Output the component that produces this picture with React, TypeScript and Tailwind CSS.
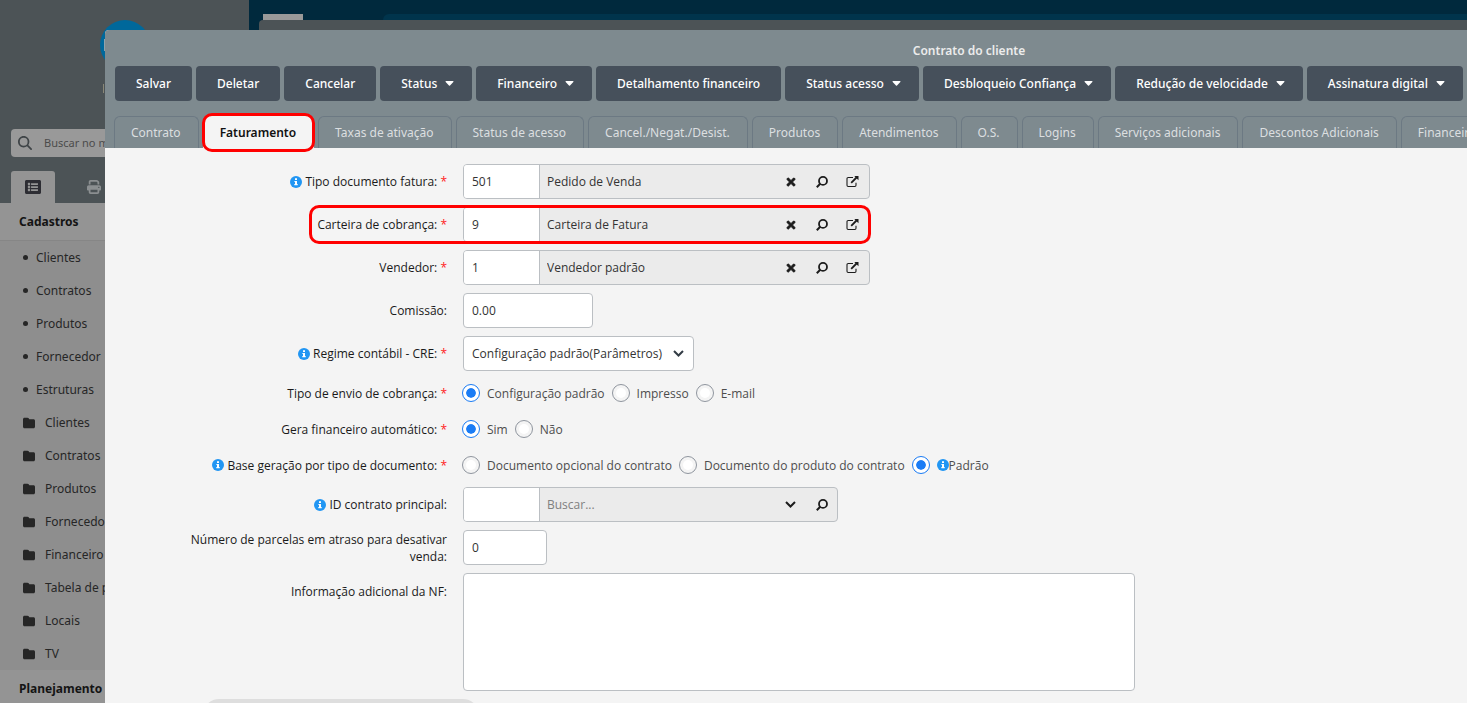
import { useId } from 'react';
import type { ReactNode } from 'react';
import { FaListAlt, FaTimes } from 'react-icons/fa';
import { FaFolder, FaMagnifyingGlass, FaPrint } from 'react-icons/fa6';

const shortcuts = ['Clientes', 'Contratos', 'Produtos', 'Fornecedor', 'Estruturas'];

const folders = [
  'Clientes',
  'Contratos',
  'Produtos',
  'Fornecedores',
  'Financeiro',
  'Tabela de preços',
  'Locais',
  'TV',
];

const actions = [
  { label: 'Salvar' },
  { label: 'Deletar' },
  { label: 'Cancelar' },
  { label: 'Status', menu: true },
  { label: 'Financeiro', menu: true },
  { label: 'Detalhamento financeiro' },
  { label: 'Status acesso', menu: true },
  { label: 'Desbloqueio Confiança', menu: true },
  { label: 'Redução de velocidade', menu: true },
  { label: 'Assinatura digital', menu: true },
];

const tabs = [
  'Contrato',
  'Faturamento',
  'Taxas de ativação',
  'Status de acesso',
  'Cancel./Negat./Desist.',
  'Produtos',
  'Atendimentos',
  'O.S.',
  'Logins',
  'Serviços adicionais',
  'Descontos Adicionais',
  'Financeiro',
];

function InfoIcon() {
  return (
    <svg className="size-3 shrink-0" viewBox="0 0 12 12" aria-hidden>
      <circle cx="6" cy="6" r="6" fill="#2196f3" />
      <path fill="#fff" d="M5 2.3h2v1.6H5zM4.4 4.9H7v3.2h.7v1.2H4.3V8.1H5V6.1h-.6z" />
    </svg>
  );
}

function LookupSearchIcon() {
  return (
    <svg className="size-3" viewBox="0 0 12 12" fill="none" stroke="currentColor" aria-hidden>
      <circle cx="7" cy="4.9" r="4" strokeWidth="1.8" />
      <path d="M4.2 7.8.8 11.2" strokeWidth="2" />
    </svg>
  );
}

function OpenIcon() {
  return (
    <svg className="h-3 w-[13px]" viewBox="0 0 13 12" fill="none" stroke="currentColor" aria-hidden>
      <path d="M7 1.5H2.2Q1 1.5 1 2.7v6.6Q1 10.5 2.2 10.5h6.6Q10 10.5 10 9.3V6.7" strokeWidth="1.1" />
      <path d="M5.2 6.8 10.5 1.5" strokeWidth="1.8" />
      <path d="M8.3 0h4.2v4.2z" fill="currentColor" stroke="none" />
    </svg>
  );
}

function ChevronIcon() {
  return (
    <svg className="h-[7px] w-[11px]" viewBox="0 0 11 7" fill="none" stroke="currentColor" aria-hidden>
      <path d="M1 1l4.5 4.5L10 1" strokeWidth="2" />
    </svg>
  );
}

function Highlight({ className }: { className: string }) {
  return (
    <span
      className={`pointer-events-none absolute z-10 rounded-[10px] border-3 border-[#ff0000] ${className}`}
      aria-hidden
    />
  );
}

type RowProps = {
  label: string;
  htmlFor?: string;
  id?: string;
  info?: boolean;
  required?: boolean;
  top?: boolean;
  children: ReactNode;
};

function Row({ label, htmlFor, id, info, required, top, children }: RowProps) {
  const text = (
    <>
      {label}
      {required && <span className="text-[#ff1a1a]"> *</span>}
    </>
  );
  return (
    <div className={`flex gap-4 ${top ? 'items-start' : 'items-center'}`}>
      <div
        className={`flex w-[342px] shrink-0 items-center justify-end gap-[3px] pl-20 text-right leading-[17px] text-[#1a1a1a] ${top ? 'pt-[10px]' : ''}`}
      >
        {info && <InfoIcon />}
        {htmlFor ? <label htmlFor={htmlFor}>{text}</label> : <span id={id}>{text}</span>}
      </div>
      {children}
    </div>
  );
}

type LookupProps = {
  label: string;
  code: string;
  value: string;
  info?: boolean;
  required?: boolean;
  search?: boolean;
  highlighted?: boolean;
};

function LookupRow({ label, code, value, info, required, search, highlighted }: LookupProps) {
  const id = useId();
  const iconButton = 'flex h-full w-[31px] items-center justify-center';
  return (
    <Row label={label} htmlFor={id} info={info} required={required}>
      <div
        className={`relative flex h-[35px] rounded-[4px] border border-[#bbbfc3] bg-[#ebebeb] ${search ? 'w-[375px]' : 'w-[407px]'}`}
      >
        <input
          id={id}
          defaultValue={code}
          className="w-[76px] rounded-l-[3px] border-r border-[#bbbfc3] bg-white px-2 text-[#333] outline-none"
        />
        <input
          aria-label={`${label} descrição`}
          defaultValue={value}
          placeholder="Buscar..."
          className="min-w-0 flex-1 px-[7px] text-[#333] outline-none placeholder:text-[#808080]"
        />
        <div className={`flex items-center text-[#1c1c1c] ${search ? '' : 'pr-px'}`}>
          <button type="button" className={iconButton} aria-label={search ? 'Abrir lista' : 'Limpar'}>
            {search ? <ChevronIcon /> : <FaTimes className="size-3" stroke="currentColor" strokeWidth="30" />}
          </button>
          <button type="button" className={iconButton} aria-label="Buscar">
            <LookupSearchIcon />
          </button>
          {!search && (
            <button type="button" className={iconButton} aria-label="Abrir cadastro">
              <OpenIcon />
            </button>
          )}
        </div>
        {highlighted && <Highlight className="-top-[3px] -right-[2px] -bottom-[3px] -left-[155px]" />}
      </div>
    </Row>
  );
}

type RadioRowProps = {
  label: string;
  options: { label: string; info?: boolean }[];
  selected: number;
  info?: boolean;
};

function RadioRow({ label, options, selected, info }: RadioRowProps) {
  const id = useId();
  return (
    <Row label={label} id={id} info={info} required>
      <div role="radiogroup" aria-labelledby={id} className="-ml-px flex h-7 items-center gap-[7px]">
        {options.map((option, i) => (
          <label key={option.label} className="flex items-center leading-[17px] text-[#4d4d4d]">
            <input
              type="radio"
              name={id}
              defaultChecked={i === selected}
              className="mr-[7px] size-[18px] appearance-none rounded-full border border-[#8f959e] bg-white bg-clip-content p-[3px] checked:border-[#1a7cf5] checked:bg-[#1a7cf5] checked:shadow-[inset_0_0_0_3px_#fff]"
            />
            {option.info && <InfoIcon />}
            {option.label}
          </label>
        ))}
      </div>
    </Row>
  );
}

function Sidebar() {
  return (
    <aside className="flex w-[249px] shrink-0 flex-col bg-[#4c5356]">
      <div className="flex h-[129px] shrink-0 flex-col items-center pt-5">
        <div className="flex size-[50px] items-center rounded-full bg-[#00689b] pl-1">
          <span className="h-3 w-[3px] bg-[#8fa3ad]" />
        </div>
        <span className="mt-[14px] mr-[42px] h-[9px] w-px bg-[#8a8878]" />
      </div>
      <label className="mx-[11px] flex h-7 shrink-0 items-center gap-3 rounded-[4px] bg-[#999] px-[7px] text-[#3f4447]">
        <FaMagnifyingGlass className="size-[14px] shrink-0" />
        <input
          placeholder="Buscar no menu"
          className="min-w-0 flex-1 text-[11px] outline-none placeholder:text-[#4b4b4b]"
        />
      </label>
      <div className="mt-[14px] flex shrink-0 px-[11px]">
        <button
          type="button"
          aria-label="Menu"
          className="flex h-8 w-11 items-center justify-center rounded-t-[3px] bg-[#949494] text-[#2d2d33]"
        >
          <FaListAlt className="size-4" />
        </button>
        <button
          type="button"
          aria-label="Relatórios"
          className="flex h-8 w-[77px] items-center justify-center text-[#8b8f91]"
        >
          <FaPrint className="size-[14px]" />
        </button>
      </div>
      <nav className="flex-1 bg-[#8e8e8e] text-[#262626]">
        <h2 className="flex h-[38px] items-center border-b border-[#868686] bg-[#949494] px-[19px] font-bold text-[#141414]">
          Cadastros
        </h2>
        <ul>
          {shortcuts.map((item) => (
            <li key={item}>
              <a href="#" className="flex h-[33px] items-center gap-2 pl-[23px]">
                <span className="size-[5px] rounded-full bg-[#262626]" />
                {item}
              </a>
            </li>
          ))}
          {folders.map((item) => (
            <li key={item}>
              <a href="#" className="flex h-[33px] items-center gap-[10px] pl-[23px]">
                <FaFolder className="size-3" />
                {item}
              </a>
            </li>
          ))}
        </ul>
        <h2 className="flex h-[37px] items-center bg-[#949494] px-[19px] font-bold text-[#141414]">
          Planejamento
        </h2>
      </nav>
    </aside>
  );
}

export default function App() {
  return (
    <div className="relative flex h-screen overflow-hidden bg-[#4c5356] font-['Noto_Sans',sans-serif] text-[12px]">
      <Sidebar />
      <div className="flex min-w-0 flex-1 flex-col bg-[#00293d]">
        <div className="h-[14px]" />
        <div className="flex h-[6px] pl-[14px]">
          <div className="w-10 bg-[#999]" />
          <div className="ml-20 flex-1 rounded-tl-[12px] bg-[#00344c]" />
        </div>
        <div className="ml-[10px] flex-1 rounded-tl-[4px] bg-[#4c5356]" />
      </div>

      {/* Contract window, wider than the screen */}
      <section
        aria-labelledby="window-title"
        className="absolute top-[30px] -right-[366px] bottom-0 left-[105px] overflow-hidden rounded-tl-[4px] bg-[#f4f4f4]"
      >
        <header className="bg-[#7e8a8f] pt-[13px]">
          <h1 id="window-title" className="text-center leading-4 font-semibold text-[#ececec]">
            Contrato do cliente
          </h1>
          <div className="flex gap-1 px-[10px] pt-[7px]">
            {actions.map((action) => (
              <button
                key={action.label}
                type="button"
                className={`flex h-[35px] shrink-0 items-center gap-2 rounded-[4px] bg-[#46505b] pl-[21px] font-medium text-white ${action.menu ? 'pr-[18px]' : 'pr-[21px]'}`}
              >
                {action.label}
                {action.menu && (
                  <svg className="h-[5px] w-[9px]" viewBox="0 0 9 5" aria-hidden>
                    <path fill="currentColor" d="M1 0h7q.8.3.3.9L5 4.6q-.5.5-1 0L.7.9Q.2.3 1 0z" />
                  </svg>
                )}
              </button>
            ))}
          </div>
          <div role="tablist" className="flex gap-1 px-[9px] pt-[15px]">
            {tabs.map((tab) => {
              const active = tab === 'Faturamento';
              return (
                <button
                  key={tab}
                  type="button"
                  role="tab"
                  aria-selected={active}
                  className={`relative h-8 shrink-0 rounded-t-[6px] border border-b-0 pr-[17px] pl-4 ${
                    active
                      ? 'border-[#f4f4f4] bg-[#f4f4f4] font-semibold text-[#111]'
                      : 'border-[#6c7983] text-[#dcdfe0]'
                  }`}
                >
                  {tab}
                  {active && <Highlight className="-top-[4px] -right-[2px] -bottom-[4px] -left-[2px]" />}
                </button>
              );
            })}
          </div>
        </header>

        <form className="flex flex-col gap-2 pt-4 font-['Open_Sans','Noto_Sans',sans-serif]">
          <LookupRow label="Tipo documento fatura:" code="501" value="Pedido de Venda" info required />
          <LookupRow label="Carteira de cobrança:" code="9" value="Carteira de Fatura" required highlighted />
          <LookupRow label="Vendedor:" code="1" value="Vendedor padrão" required />
          <Row label="Comissão:" htmlFor="comissao">
            <input
              id="comissao"
              defaultValue="0.00"
              className="h-[35px] w-[130px] rounded-[4px] border border-[#bbbfc3] bg-white px-2 text-[#333] outline-none"
            />
          </Row>
          <Row label="Regime contábil - CRE:" htmlFor="regime" info required>
            <div className="relative">
              <select
                id="regime"
                className="h-[35px] w-[231px] appearance-none rounded-[4px] border border-[#bbbfc3] bg-white px-2 text-[#333] outline-none"
              >
                <option>Configuração padrão(Parâmetros)</option>
              </select>
              <span className="pointer-events-none absolute top-[14px] right-[10px] text-[#333c45]">
                <ChevronIcon />
              </span>
            </div>
          </Row>
          <RadioRow
            label="Tipo de envio de cobrança:"
            options={[{ label: 'Configuração padrão' }, { label: 'Impresso' }, { label: 'E-mail' }]}
            selected={0}
          />
          <RadioRow
            label="Gera financeiro automático:"
            options={[{ label: 'Sim' }, { label: 'Não' }]}
            selected={0}
          />
          <RadioRow
            label="Base geração por tipo de documento:"
            options={[
              { label: 'Documento opcional do contrato' },
              { label: 'Documento do produto do contrato' },
              { label: 'Padrão', info: true },
            ]}
            selected={2}
            info
          />
          <LookupRow label="ID contrato principal:" code="" value="" info search />
          <Row label="Número de parcelas em atraso para desativar venda:" htmlFor="parcelas">
            <input
              id="parcelas"
              defaultValue="0"
              className="h-[35px] w-[84px] rounded-[4px] border border-[#bbbfc3] bg-white px-2 text-[#333] outline-none"
            />
          </Row>
          <Row label="Informação adicional da NF:" htmlFor="info-nf" top>
            <textarea
              id="info-nf"
              className="h-[118px] w-[672px] resize-none rounded-[4px] border border-[#bbbfc3] bg-white p-2 text-[#333] outline-none"
            />
          </Row>
          <div className="ml-[98px] h-8 w-[276px] rounded-full bg-[#dedede]" />
        </form>
      </section>
    </div>
  );
}
